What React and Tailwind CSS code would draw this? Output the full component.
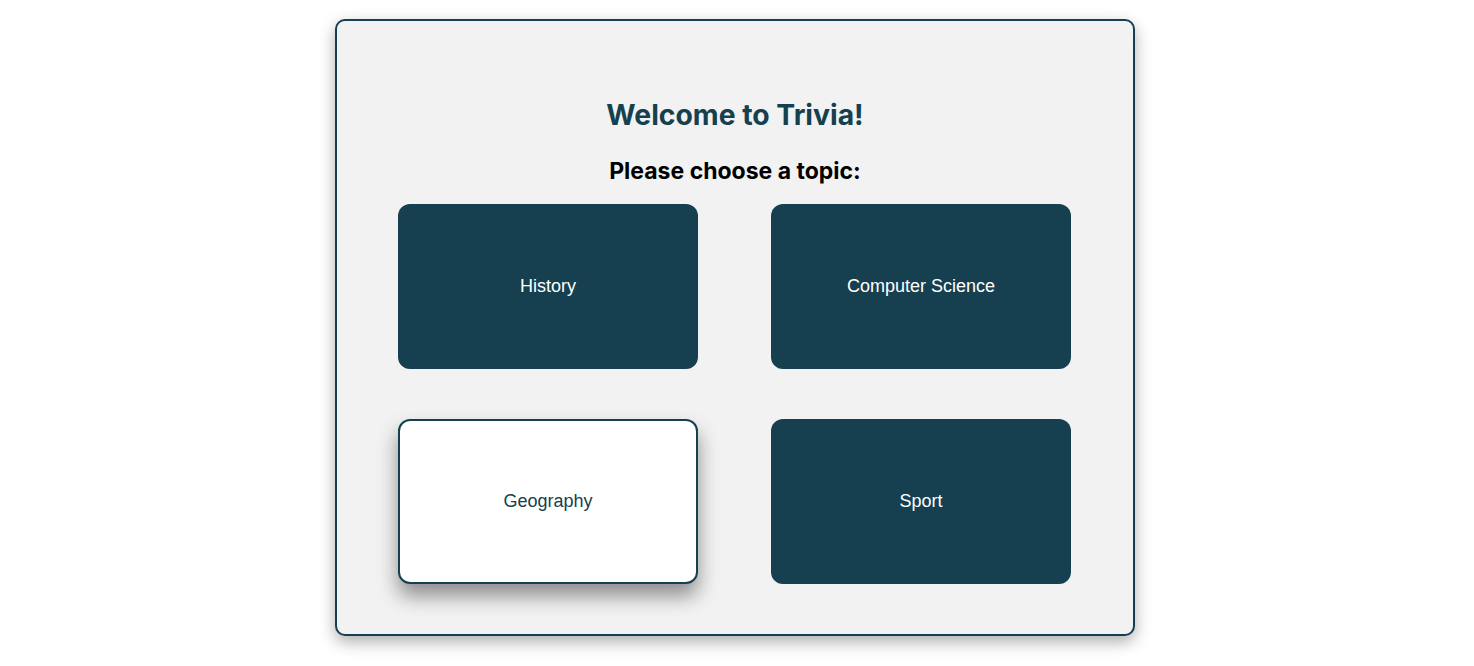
const topics = ['History', 'Computer Science', 'Geography', 'Sport']

function App() {
    const hovered = 'Geography'

    return (
        <div className="min-h-screen bg-white flex justify-center pt-[19px] pr-[4px]" style={{ fontFamily: 'Inter, sans-serif' }}>
            <div className="w-[800px] h-[617px] bg-[#f2f2f2] border-2 border-[#15404f] rounded-[10px] shadow-[0_6px_16px_rgba(0,0,0,0.32)] flex flex-col items-center pt-[77px] px-[61px]">
                <h1 className="text-[28.3px] leading-[34px] font-bold text-[#15404f]">Welcome to Trivia!</h1>
                <h2 className="mt-[25px] text-[23px] leading-[28px] font-bold text-black">Please choose a topic:</h2>
                <div className="mt-[19px] grid grid-cols-[300px_300px] gap-x-[73px] gap-y-[50px] w-full">
                    {topics.map((t) =>
                        t === hovered ? (
                            <button
                                key={t}
                                className="h-[165px] rounded-[12px] bg-white border-2 border-[#15404f] text-[#15404f] text-[18px] shadow-[0_12px_20px_rgba(0,0,0,0.42)]"
                                style={{ fontFamily: '"Liberation Sans", Arial, sans-serif' }}
                            >
                                {t}
                            </button>
                        ) : (
                            <button
                                key={t}
                                className="h-[165px] rounded-[12px] bg-[#163f50] text-white text-[18px]"
                                style={{ fontFamily: '"Liberation Sans", Arial, sans-serif' }}
                            >
                                {t}
                            </button>
                        )
                    )}
                </div>
            </div>
        </div>
    )
}

export default App
